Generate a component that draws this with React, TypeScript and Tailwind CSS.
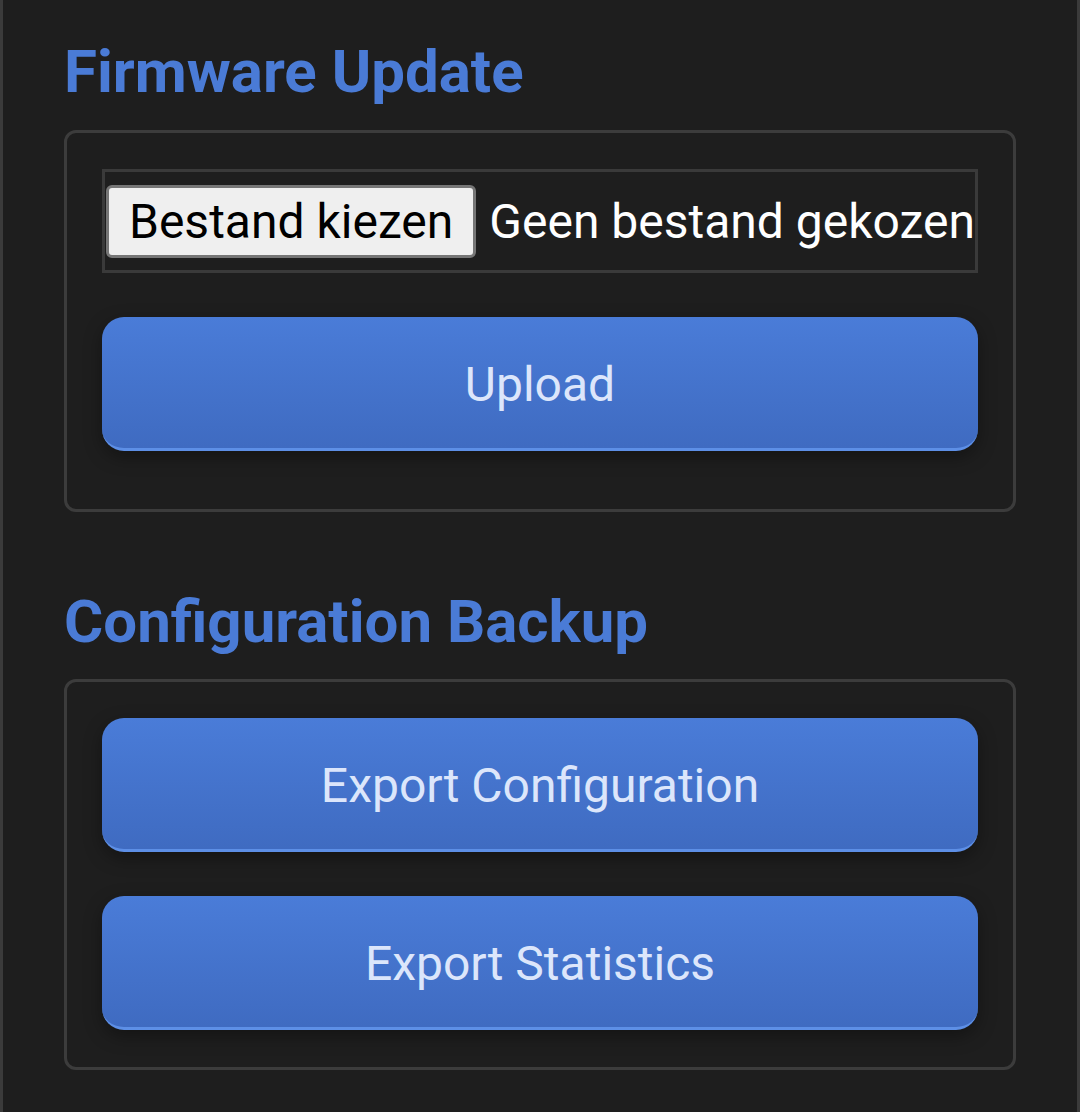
import React from 'react';

const BlueButton = ({ label }: { label: string }) => (
  <button
    type="button"
    className="w-full h-[134px] rounded-[22px] bg-gradient-to-b from-[#4a7cd8] to-[#3f6bc1] border-b-[3px] border-[#5d8fe6] text-[#dce6fb] text-[48px] font-normal pt-[4px] shadow-[0_6px_18px_rgba(0,0,0,0.35)]"
  >
    {label}
  </button>
);

const Card = ({ children, className = '' }: { children: React.ReactNode; className?: string }) => (
  <div className={`border-[3px] border-[#3c3c3c] rounded-[12px] px-[35px] pt-[36px] ${className}`}>{children}</div>
);

export default function App() {
  return (
    <div
      className="min-h-[1112px] bg-[#1e1e1e] border-x-[3px] border-[#3b3b3b] pl-[61px] pr-[61px] pt-[36px] pb-[40px]"
      style={{ fontFamily: 'Roboto, "Noto Sans", sans-serif' }}
    >
      {/* Firmware */}
      <h2 className="text-[#4a7bd6] text-[60px] font-bold leading-[72px]">Firmware Update</h2>
      <Card className="mt-[22px] pb-[58px]">
        <div className="h-[104px] border-[3px] border-[#3a3a3a] pl-[1px] pt-[13px] flex items-start gap-[13px] overflow-hidden">
          <div className="shrink-0 h-[73px] px-[20px] flex items-center bg-[#efefef] border-[3px] border-[#767676] rounded-[6px] text-black text-[48px] whitespace-nowrap">
            Bestand kiezen
          </div>
          <span className="h-[73px] flex items-center text-white text-[48px] whitespace-nowrap">Geen bestand gekozen</span>
        </div>
        <div className="mt-[44px]">
          <BlueButton label="Upload" />
        </div>
      </Card>

      {/* Backup */}
      <h2 className="mt-[74px] text-[#4a7bd6] text-[60px] font-bold leading-[72px]">Configuration Backup</h2>
      <Card className="mt-[21px] pb-[37px]">
        <div className="flex flex-col gap-[44px]">
          <BlueButton label="Export Configuration" />
          <BlueButton label="Export Statistics" />
        </div>
      </Card>
    </div>
  );
}
